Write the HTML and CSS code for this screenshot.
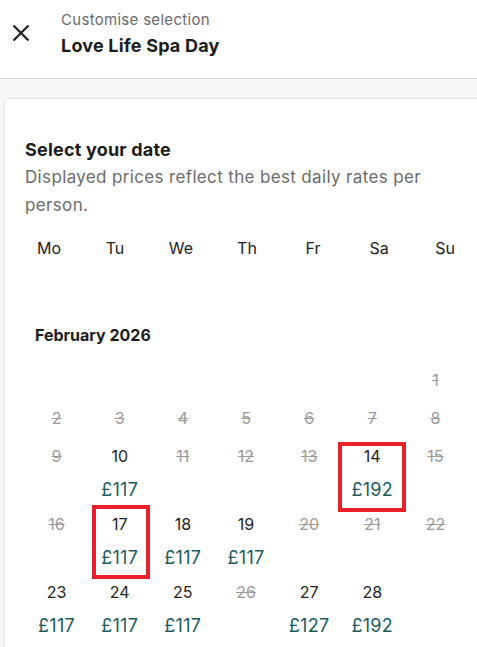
FILE: index.html
```html
<!DOCTYPE html>
<html lang="en">
<head>
<meta charset="utf-8">
<title>Customise selection</title>
<link rel="stylesheet" href="styles.css">
</head>
<body>
<header class="topbar">
  <button class="close" aria-label="Close">
    <svg width="18" height="18" viewBox="0 0 18 18"><path d="M1.5 1.5 L16.5 16.5 M16.5 1.5 L1.5 16.5" stroke="#1f1f1f" stroke-width="2.2" fill="none"/></svg>
  </button>
  <div class="titles">
    <div class="eyebrow">Customise selection</div>
    <div class="product">Love Life Spa Day</div>
  </div>
</header>
<main class="page">
  <section class="card">
    <h2 class="heading">Select your date</h2>
    <p class="sub">Displayed prices reflect the best daily rates per person.</p>
    <div class="weekdays">
      <span>Mo</span><span>Tu</span><span>We</span><span>Th</span><span>Fr</span><span>Sa</span><span>Su</span>
    </div>
    <h3 class="month">February 2026</h3>
    <div class="dates">
      <div class="cell"></div><div class="cell"></div><div class="cell"></div><div class="cell"></div><div class="cell"></div><div class="cell"></div>
      <div class="cell off"><span class="num">1</span></div>

      <div class="cell off"><span class="num">2</span></div>
      <div class="cell off"><span class="num">3</span></div>
      <div class="cell off"><span class="num">4</span></div>
      <div class="cell off"><span class="num">5</span></div>
      <div class="cell off"><span class="num">6</span></div>
      <div class="cell off"><span class="num">7</span></div>
      <div class="cell off"><span class="num">8</span></div>

      <div class="cell off"><span class="num">9</span></div>
      <div class="cell"><span class="num">10</span><span class="price">£117</span></div>
      <div class="cell off"><span class="num">11</span></div>
      <div class="cell off"><span class="num">12</span></div>
      <div class="cell off"><span class="num">13</span></div>
      <div class="cell mark mark-a"><span class="num">14</span><span class="price">£192</span></div>
      <div class="cell off"><span class="num">15</span></div>

      <div class="cell off"><span class="num">16</span></div>
      <div class="cell mark mark-b"><span class="num">17</span><span class="price">£117</span></div>
      <div class="cell"><span class="num">18</span><span class="price">£117</span></div>
      <div class="cell"><span class="num">19</span><span class="price">£117</span></div>
      <div class="cell off"><span class="num">20</span></div>
      <div class="cell off"><span class="num">21</span></div>
      <div class="cell off"><span class="num">22</span></div>

      <div class="cell"><span class="num">23</span><span class="price">£117</span></div>
      <div class="cell"><span class="num">24</span><span class="price">£117</span></div>
      <div class="cell"><span class="num">25</span><span class="price">£117</span></div>
      <div class="cell off"><span class="num">26</span></div>
      <div class="cell"><span class="num">27</span><span class="price">£127</span></div>
      <div class="cell"><span class="num">28</span><span class="price">£192</span></div>
      <div class="cell"></div>
    </div>
  </section>
</main>
</body>
</html>
```
FILE: styles.css
```css
html, body {
  margin: 0;
  padding: 0;
  overflow: hidden;
}
body {
  background: #f7f7f7;
  font-family: Inter, "Open Sans", sans-serif;
  color: #222;
  height: 647px;
}
.topbar {
  background: #fff;
  border-bottom: 1px solid #d9d9d9;
  height: 79px;
  display: flex;
  align-items: flex-start;
  box-sizing: border-box;
}
.close {
  border: 0;
  background: none;
  padding: 0;
  margin: 24px 0 0 12px;
  width: 18px;
  height: 18px;
  display: flex;
}
.titles {
  margin: 10px 0 0 31px;
}
.eyebrow {
  font-size: 15px;
  line-height: 20px;
  color: #6b6b6b;
  letter-spacing: 0.3px;
}
.product {
  margin-top: 4px;
  font-size: 18px;
  line-height: 24px;
  font-weight: 700;
  color: #1c1c1c;
  letter-spacing: 0.2px;
}
.page {
  padding: 19px 0 0 4px;
}
.card {
  background: #fff;
  border: 1px solid #e3e3e3;
  border-radius: 6px;
  width: 484px;
  box-sizing: border-box;
  padding: 39px 20px 40px;
  height: 620px;
}
.heading {
  margin: 0;
  font-size: 18px;
  line-height: 24px;
  font-weight: 700;
  color: #1c1c1c;
  letter-spacing: 0.2px;
}
.sub {
  margin: 1px 0 0;
  font-size: 17px;
  line-height: 28px;
  color: #6b6b6b;
  width: 410px;
  letter-spacing: 0.35px;
}
.weekdays {
  margin: 17px -11px 0 -9px;
  display: grid;
  grid-template-columns: repeat(7, 1fr);
  text-align: center;
  font-size: 16px;
  line-height: 24px;
  color: #222;
}
.month {
  margin: 63px 0 0 10px;
  font-size: 16px;
  line-height: 24px;
  font-weight: 700;
  color: #1c1c1c;
}
.dates {
  margin-top: 14px;
  display: grid;
  grid-template-columns: repeat(7, 1fr);
  text-align: center;
}
.cell {
  position: relative;
  display: flex;
  flex-direction: column;
  min-height: 38px;
}
.num {
  display: block;
  height: 38px;
  line-height: 38px;
  font-size: 16px;
  color: #222;
}
.price {
  display: block;
  height: 30px;
  line-height: 30px;
  font-size: 18px;
  color: #1d5c5e;
  letter-spacing: 0.3px;
}
.off .num {
  color: #9a9a9a;
  text-decoration: line-through;
}
.mark::after {
  content: "";
  position: absolute;
  border: 4px solid #e8202a;
}
.mark-a::after {
  top: 5px;
  left: -3px;
  right: -2px;
  bottom: -7px;
}
.mark-b::after {
  top: 0;
  left: 4px;
  right: 1px;
  bottom: -6px;
}
```
